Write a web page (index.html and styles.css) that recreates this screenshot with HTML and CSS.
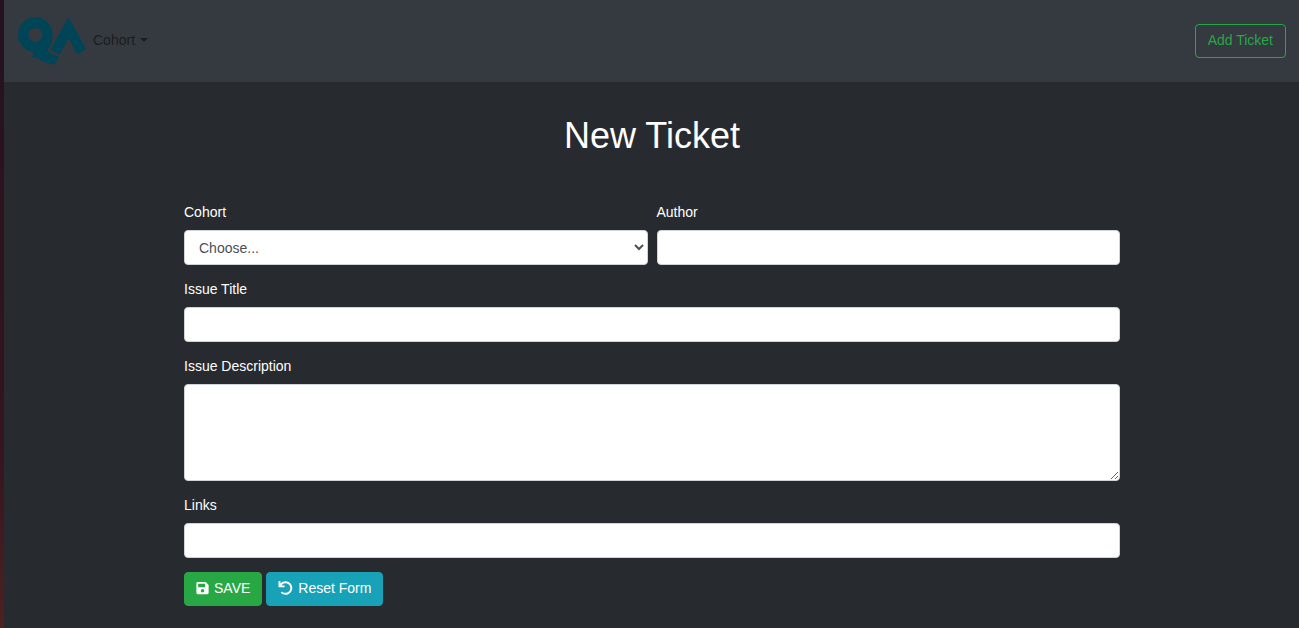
FILE: index.html
```html
<!DOCTYPE html>
<html lang="en">
<head>
<meta charset="utf-8">
<title>New Ticket</title>
<link rel="stylesheet" href="styles.css">
</head>
<body>
<header class="navbar">
  <a class="brand" href="#" aria-label="QA home">
    <svg class="logo" viewBox="54 50 204 144" aria-hidden="true">
      <path fill-rule="evenodd" d="M106 51C77 51 54 74 54 103C54 129 73 150 99 155C102 160 99 166 94 170C102 171 107 170 113 174C127 183 144 191 162 193C167 187 173 178 177 167C166 167 156 163 150 158L140 151C152 141 158 124 158 103C158 74 135 51 106 51ZM106 83A21 21 0 1 1 106 125A21 21 0 1 1 106 83Z"/>
      <path d="M203 54Q205 52 207 54L258 146Q246 156 231 161L206 114L180 161Q165 157 152 148Z"/>
    </svg>
  </a>
  <nav class="menu">
    <button class="menu-toggle" type="button" aria-haspopup="true">Cohort<span class="caret"></span></button>
  </nav>
  <button class="btn btn-outline" type="button">Add Ticket</button>
</header>
<main class="container">
  <h1 class="title">New Ticket</h1>
  <form>
    <div class="row">
      <div class="field">
        <label for="cohort">Cohort</label>
        <select class="control" id="cohort"><option>Choose...</option></select>
      </div>
      <div class="field">
        <label for="author">Author</label>
        <input class="control" id="author" type="text">
      </div>
    </div>
    <div class="field">
      <label for="issue-title">Issue Title</label>
      <input class="control" id="issue-title" type="text">
    </div>
    <div class="field">
      <label for="description">Issue Description</label>
      <textarea class="control control-area" id="description"></textarea>
    </div>
    <div class="field">
      <label for="links">Links</label>
      <input class="control" id="links" type="text">
    </div>
    <div class="actions">
      <button class="btn btn-save" type="submit">
        <svg class="icon" viewBox="0 0 448 512" aria-hidden="true"><path d="M433.9 129.9l-83.8-83.8A48 48 0 0 0 316.1 32H48A48 48 0 0 0 0 80v352a48 48 0 0 0 48 48h352a48 48 0 0 0 48-48V163.9a48 48 0 0 0-14.1-34zM224 416a64 64 0 1 1 0-128 64 64 0 0 1 0 128zm96-304.5V212a12 12 0 0 1-12 12H76a12 12 0 0 1-12-12V108a12 12 0 0 1 12-12h228.500a12 12 0 0 1 8.500 3.500l3.500 3.500a12 12 0 0 1 3.500 8.500z"/></svg>SAVE</button>
      <button class="btn btn-reset" type="reset">
        <svg class="icon icon-wide" viewBox="0 0 512 512" aria-hidden="true"><path d="M212.300 224.300H12a12 12 0 0 1-12-12V12A12 12 0 0 1 12 0h48a12 12 0 0 1 12 12v78.100A247 247 0 0 1 256.200 8C393 8.100 504.300 119.600 504 256.300 503.700 393.200 392.800 504 256 504a247 247 0 0 1-165.200-63.100 12 12 0 0 1-.5-17.400l34-34a12 12 0 0 1 16.400-.6A175 175 0 0 0 256 432c97.300 0 176-78.700 176-176 0-97.300-78.700-176-176-176a176 176 0 0 0-149.500 82.800l105.800-.5a12 12 0 0 1 12 12v38a12 12 0 0 1-12 12z"/></svg>Reset Form</button>
    </div>
  </form>
</main>
</body>
</html>
```
FILE: styles.css
```css
* {
  box-sizing: border-box;
}

html {
  background: #272b30;
}

body {
  margin: 0;
  min-height: 100vh;
  padding-left: 4px;
  background: linear-gradient(#24121e, #34141f 70%, #4c221f) left / 4px 100% no-repeat;
  color: #fff;
  font-family: "Liberation Sans", Arial, sans-serif;
  font-size: 14px;
  line-height: 21px;
}

button,
input,
select,
textarea {
  font: inherit;
}

.navbar {
  display: flex;
  align-items: center;
  padding: 17px 13px 17px 14px;
  background: #343a40;
}

.brand {
  display: flex;
}

.logo {
  width: 68px;
  height: 48px;
  fill: #004557;
}

.menu {
  flex: 1;
  padding-left: 7px;
}

.menu-toggle {
  display: flex;
  align-items: center;
  gap: 5px;
  padding: 0 0 2px;
  border: 0;
  background: none;
  color: #1a1d20;
}

.caret {
  border: 4px solid transparent;
  border-top-color: currentColor;
  border-bottom: 0;
}

.btn {
  display: inline-flex;
  align-items: center;
  gap: 5px;
  height: 34px;
  padding: 0 11px;
  border: 1px solid;
  border-radius: 4px;
  color: #fff;
}

.btn-outline {
  padding: 0 12px 2px;
  border-color: #28a745;
  background: none;
  color: #28a745;
}

.btn-save {
  border-color: #28a745;
  background: #28a745;
}

.btn-reset {
  border-color: #17a2b8;
  background: #17a2b8;
}

.icon {
  width: 13px;
  height: 14px;
  fill: currentColor;
}

.icon-wide {
  width: 15px;
}

.container {
  max-width: 937px;
  margin: 0 auto;
  padding: 32px 0 22px 1px;
}

.title {
  margin: 0 0 45px;
  font-size: 36px;
  font-weight: 400;
  line-height: 43px;
  text-align: center;
}

.row {
  display: grid;
  grid-template-columns: 1fr 1fr;
  gap: 9px;
}

.field {
  margin-bottom: 14px;
}

label {
  display: block;
  margin-bottom: 7px;
}

.control {
  display: block;
  width: 100%;
  height: 35px;
  padding: 6px 10px;
  border: 1px solid #ced4da;
  border-radius: 4px;
  background: #fff;
  color: #495057;
}

.control-area {
  height: 97px;
  resize: vertical;
}

.actions {
  display: flex;
  gap: 4px;
}

.actions .btn {
  padding-bottom: 2px;
}
```
